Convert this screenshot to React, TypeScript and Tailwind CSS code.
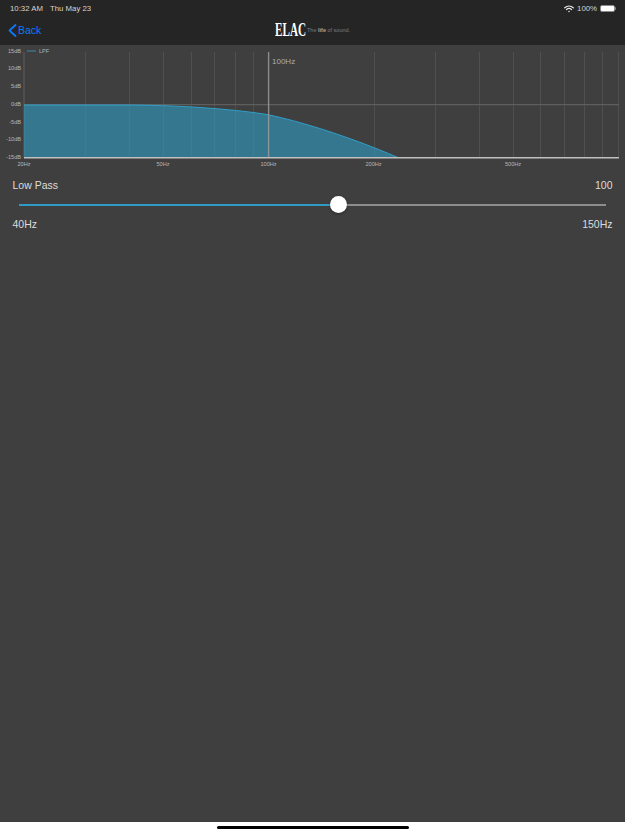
const gridX = [85, 129, 163, 191, 214, 235, 253, 374, 435, 479, 513, 540, 564, 584, 602, 618];
const dbLabels: [string, number][] = [["15dB", 52.6], ["10dB", 70.2], ["5dB", 88], ["0dB", 105.8], ["-5dB", 123.6], ["-10dB", 141.2], ["-15dB", 158.6]];
const hzLabels: [string, number][] = [["20Hz", 24], ["50Hz", 163], ["100Hz", 268.6], ["200Hz", 373.6], ["500Hz", 513]];
const CURVE = "C190 105.5 240 110 268 114.7C300 121.5 345 135 398 157.5";

function Chart() {
  return (
    <svg width="625" height="125" viewBox="0 45 625 125" className="block shrink-0" fontFamily="'Liberation Sans', Arial, sans-serif">
      <line x1="24" y1="52" x2="24" y2="158" stroke="#5e5e5e" strokeWidth="1" />
      {gridX.map((x) => (
        <line key={x} x1={x + 0.5} y1="52" x2={x + 0.5} y2="157" stroke="#4f4f4f" strokeWidth="1" />
      ))}
      <line x1="24" y1="104.7" x2="619" y2="104.7" stroke="#666666" strokeWidth="1" />
      <path d={`M24 105L130 105${CURVE}L24 157.5Z`} fill="#2f9dc4" fillOpacity="0.6" />
      <path d={`M24 105L130 105${CURVE}`} fill="none" stroke="#2f9fc8" strokeWidth="1" />
      <line x1="268.6" y1="52" x2="268.6" y2="157" stroke="#9a9a9a" strokeWidth="1.4" strokeOpacity="0.85" />
      <line x1="24" y1="157.7" x2="619" y2="157.7" stroke="#c0c0c0" strokeWidth="1.6" />
      <line x1="27" y1="51" x2="36" y2="51" stroke="#3f7f9c" strokeWidth="1.2" />
      <text x="39" y="53" fontSize="5.6" fill="#adadad">LPF</text>
      <text x="272" y="63.5" fontSize="8" fill="#adadad">100Hz</text>
      {dbLabels.map(([t, y]) => (
        <text key={t} x="21" y={y} fontSize="5.6" textAnchor="end" fill="#b8b8b8">{t}</text>
      ))}
      {hzLabels.map(([t, x]) => (
        <text key={t} x={x} y="166" fontSize="5.6" textAnchor="middle" fill="#b8b8b8">{t}</text>
      ))}
    </svg>
  );
}

export default function App() {
  return (
    <div className="flex h-[834px] w-[625px] flex-col overflow-hidden bg-[#3f3f3f] font-['Liberation_Sans',Arial,sans-serif]">
      <header className="flex h-[45px] shrink-0 flex-col bg-[#252525]">
        <div className="flex h-4 items-center justify-between pl-[10px] pr-[9px] pt-[1px] text-[7.800px] leading-none text-[#d4d4d4]">
          <div className="flex gap-[7px]">
            <span>10:32 AM</span>
            <span>Thu May 23</span>
          </div>
          <div className="flex items-center gap-[3px]">
            <svg width="10" height="8" viewBox="0 0 20 15" fill="none" stroke="#e8e8e8" strokeWidth="2.4" strokeLinecap="round">
              <path d="M1.5 5C6.500 0.500 13.500 0.500 18.500 5" />
              <path d="M5 8.500C8 6 12 6 15 8.500" />
              <circle cx="10" cy="12.500" r="1.500" fill="#e8e8e8" stroke="none" />
            </svg>
            <span>100%</span>
            <div className="flex items-center">
              <div className="h-[7px] w-[15px] rounded-[2px] border border-[#8a8a8a] bg-white" />
              <div className="h-[3px] w-[1px] rounded-r-sm bg-[#8a8a8a]" />
            </div>
          </div>
        </div>
        <div className="relative flex flex-1 items-center pb-[1px]">
          <div className="ml-2 flex items-center gap-[1px] text-[#0a7aff]">
            <svg width="9" height="13" viewBox="0 0 9 13" fill="none" stroke="#0a7aff" strokeWidth="1.700" strokeLinecap="round" strokeLinejoin="round">
              <path d="M7.500 1L1.500 6.500L7.500 12" />
            </svg>
            <span className="text-[10.500px] leading-none">Back</span>
          </div>
          <div className="absolute left-[275px] top-[7px] flex items-center">
            <span className="inline-block w-[32px] origin-left font-['Liberation_Serif',serif] text-[18px] leading-[14px] font-bold text-white [transform:scaleX(0.62)]">ELAC</span>
            <span className="mt-[1px] text-[5.500px] leading-none text-[#7d7d7d]">
              The <b className="text-[#a5a5a5]">life</b> of sound.
            </span>
          </div>
        </div>
      </header>
      <Chart />
      <main className="flex flex-1 flex-col px-[12.500px] pt-[10px] text-[10.500px] leading-none text-[#dcdcdc]">
        <div className="flex justify-between">
          <span>Low Pass</span>
          <span>100</span>
        </div>
        <div className="relative mx-[6.500px] mt-[13px] flex h-[2px]">
          <div className="w-[319px] bg-[#2f9bc2]" />
          <div className="flex-1 bg-[#8d8d8d]" />
          <div className="absolute left-[310.500px] top-[-8px] h-[17px] w-[17px] rounded-full bg-white shadow-[0_1px_3px_rgba(0,0,0,0.35)]" />
        </div>
        <div className="mt-[13px] flex justify-between">
          <span>40Hz</span>
          <span>150Hz</span>
        </div>
      </main>
      <footer className="flex h-3 shrink-0 justify-center bg-white pt-1">
        <div className="h-[3px] w-[192px] rounded-full bg-black" />
      </footer>
    </div>
  );
}
